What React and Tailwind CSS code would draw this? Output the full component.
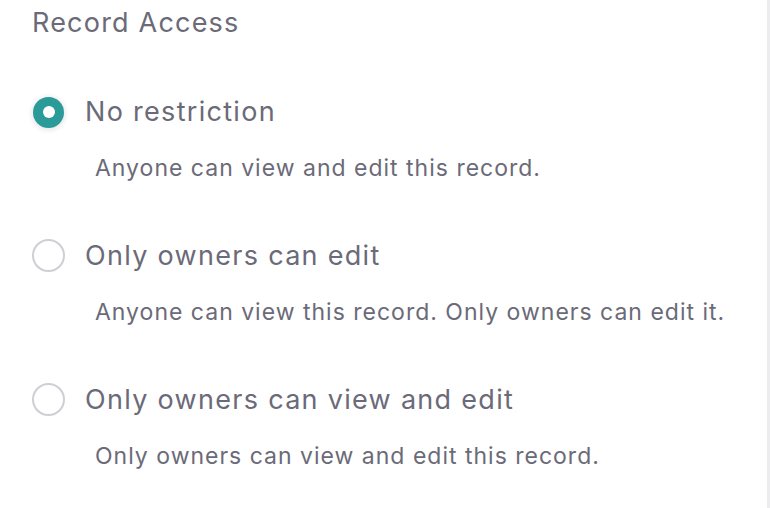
export default function App() {
  const options = [
    { label: 'No restriction', desc: 'Anyone can view and edit this record.', checked: true },
    { label: 'Only owners can edit', desc: 'Anyone can view this record. Only owners can edit it.' },
    { label: 'Only owners can view and edit', desc: 'Only owners can view and edit this record.' },
  ]

  return (
    <div className="flex h-[508px] w-[770px] bg-white font-['Inter',sans-serif] text-[#6b6a78]">
      <div className="flex-1 px-8 pt-[7px]">
        <h1 className="text-[27px] leading-8 tracking-[1.2px]">Record Access</h1>
        <div className="mt-[57px] flex flex-col gap-[57px]">
          {options.map((o) => (
            <label key={o.label} className="block">
              <div className="flex items-center gap-[20px]">
                <span className="flex w-[33px] items-center justify-center">
                  {o.checked ? (
                    <span className="flex h-[31px] w-[31px] items-center justify-center rounded-full bg-[#2a9b98] shadow-[0_1px_4px_2px_rgba(0,0,0,0.08)]">
                      <span className="h-[12px] w-[12px] rounded-full bg-white" />
                    </span>
                  ) : (
                    <span className="h-[33px] w-[33px] rounded-full border-2 border-[#cfcfd3] bg-white" />
                  )}
                </span>
                <span className="text-[27px] leading-8 tracking-[1.3px]">{o.label}</span>
              </div>
              <p className="mt-[26px] pl-[63px] text-[23px] leading-7 tracking-[1px]">{o.desc}</p>
            </label>
          ))}
        </div>
      </div>
      <div className="w-[3px] bg-[#ececee]" />
    </div>
  )
}
